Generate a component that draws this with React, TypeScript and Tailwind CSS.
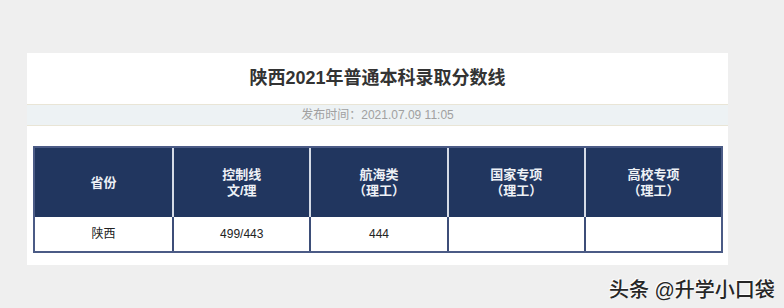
const heads: [string, string?][] = [
  ['省份'],
  ['控制线', '文/理'],
  ['航海类', '（理工）'],
  ['国家专项', '（理工）'],
  ['高校专项', '（理工）'],
];

const row = ['陕西', '499/443', '444', '', ''];

export default function App() {
  return (
    <div className="relative h-[308px] w-[784px] overflow-hidden bg-[#efefef] pl-[27px] pt-[53px] font-['Liberation_Sans','Noto_Sans_CJK_SC',sans-serif]">
      <div className="flex h-[212px] w-[701px] flex-col bg-white">
        <div className="flex h-[51px] items-center justify-center">
          <h1 className="text-[18px] font-bold text-[#333]">陕西2021年普通本科录取分数线</h1>
        </div>
        <div className="flex h-[22px] items-center justify-center border-y border-[#e9e5d6] bg-[#edf2f4] text-[12px] text-[#a0a0a0]">
          发布时间：2021.07.09 11:05
        </div>
        <div className="ml-[6px] mt-[20px] w-[690px] border-2 border-[#4b5b86]">
          <div className="grid h-[69px] grid-cols-5 bg-[#21365f] text-[13px] font-bold leading-[16px] text-[#eef1f6]">
            {heads.map(([a, b], i) => (
              <div
                key={a}
                className={`flex flex-col items-center justify-center ${i > 0 ? 'border-l-2 border-[#d5dbe6]' : ''}`}
              >
                <span>{a}</span>
                {b && <span>{b}</span>}
              </div>
            ))}
          </div>
          <div className="grid h-[34px] grid-cols-5 bg-white text-[12px] text-[#222]">
            {row.map((t, i) => (
              <div
                key={i}
                className={`flex items-center justify-center ${i > 0 ? 'border-l-2 border-[#3d4e78]' : ''}`}
              >
                {t}
              </div>
            ))}
          </div>
        </div>
      </div>
      <div className="absolute left-[609px] top-[275px] text-[20px] font-medium text-[#262626] [text-shadow:-1px_-1px_0_#fff]">
        头条 @升学小口袋
      </div>
    </div>
  );
}
